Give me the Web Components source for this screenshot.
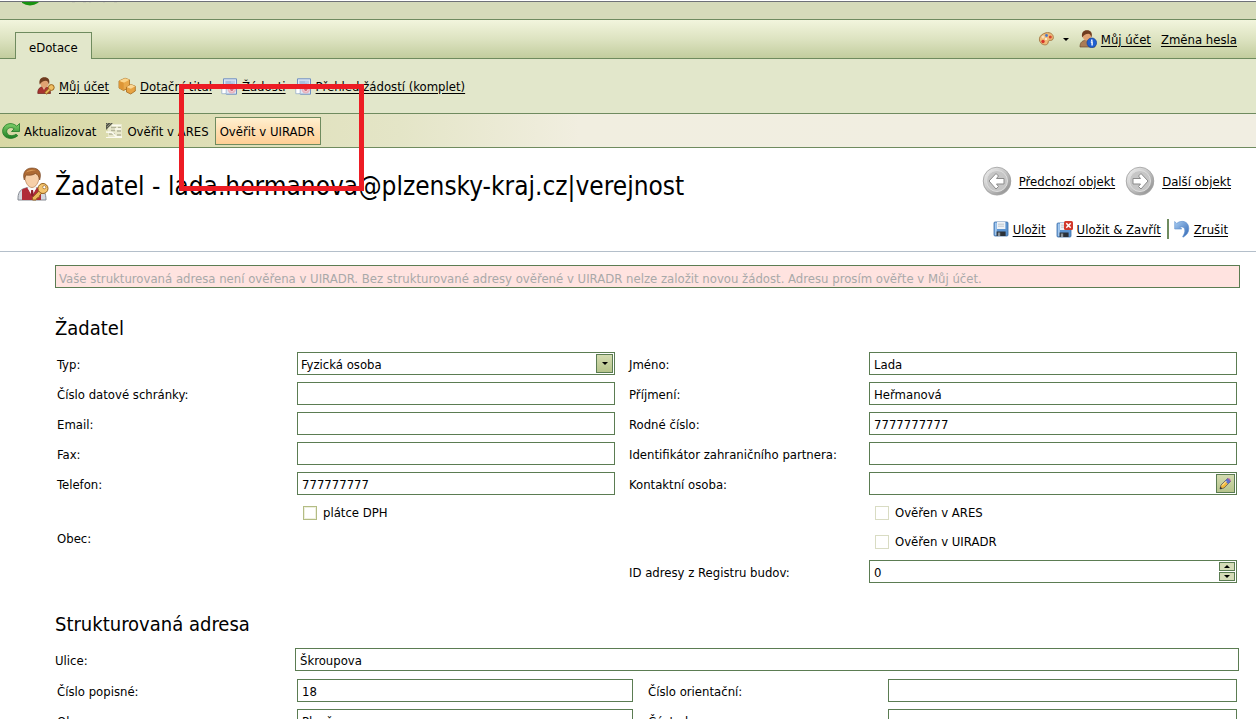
<!DOCTYPE html>
<html lang="cs">
<head>
<meta charset="utf-8">
<title>eDotace - Žadatel</title>
<style>
  html, body { height: 100%; }
  body {
    margin: 0;
    overflow: hidden;
    background: #fff;
    color: #000;
    font: 13px/16px "DejaVu Sans Condensed", "Noto Sans", sans-serif;
    --line: #6f8b5f;
    --field: #5b7c52;
  }
</style>
</head>
<body>
<edotace-page></edotace-page>
<script>
const define = (name, html, setup) => {
  const template = document.createElement('template');
  template.innerHTML = html;
  customElements.define(name, class extends HTMLElement {
    constructor() {
      super();
      this.attachShadow({ mode: 'open' }).append(template.content.cloneNode(true));
    }
    connectedCallback() {
      if (setup && !this.ready) { this.ready = true; setup(this, this.shadowRoot); }
    }
  });
};

const disk = `
  <rect x="1" y="1" width="14" height="14" rx="1" fill="#5b93d0" stroke="#3b6ca6" stroke-width=".8"/>
  <rect x="1.8" y="1.6" width="2" height="12.6" fill="#a3c8ee"/>
  <rect x="4" y="1" width="8.4" height="7" fill="#eef2f6"/>
  <path d="M5 3.2h6M5 5.2h6" stroke="#b4bcc4" stroke-width=".8"/>
  <rect x="3.6" y="10.500" width="9" height="4.500" fill="#2b3138"/>
  <rect x="4.8" y="11.500" width="2.400" height="3.500" fill="#8d959c"/>`;
const sheet = `
  <path d="M2.5 .8h13v15.4h-10l-3-2z" fill="#dfe8f5" stroke="#6f8fc0"/>
  <path d="M4 2.6h10v4H4z" fill="#b9cdea"/><path d="M5 4h5M5 6h7" stroke="#8faad0" stroke-width=".8"/>
  <path d="M.8 10.5h4.4v5.2H.8z" fill="#fff" stroke="#8ea6c8" stroke-width=".7"/>
  <circle cx="10.8" cy="11.4" r="4.2" fill="#e9b4bd"/><circle cx="10.8" cy="11.4" r="2.2" fill="#cf7180" stroke="#f6d8dd"/>`;
const hair = `<path d="M5.500 6C5 1.500 8 .6 10 .8c2.500-.2 5 1.500 4.300 5.200-.5 3-2 4.700-4.300 4.700S6 9 5.500 6z" fill="#e0a273"/>
  <path d="M5.200 7.500C4 2 7 0 10 .2c3.500 0 5.800 2.300 4.500 7.300-.7-2.500-1.500-3.700-3.200-3.800C8.800 4 6.500 5 5.200 7.500z" fill="#6f3d20"/>`;
const round = `
  <defs><linearGradient id="g" x1="0" y1="0" x2="1" y2="1"><stop offset="0" stop-color="#f4f4f4"/><stop offset=".5" stop-color="#c4c4c4"/><stop offset="1" stop-color="#858585"/></linearGradient></defs>
  <circle cx="15" cy="15.500" r="14" fill="#c2c2c2"/><circle cx="15" cy="15" r="13.800" fill="url(#g)" stroke="#a2a2a2" stroke-width=".8"/>
  <circle cx="15" cy="15" r="10.500" fill="#c6c6c6" stroke="#dedede"/>`;
const ICONS = {
  refresh: [18, 18, `<defs><linearGradient id="g" x1="0" y1="0" x2="0" y2="1"><stop offset="0" stop-color="#7fd06a"/><stop offset="1" stop-color="#1d7d22"/></linearGradient></defs>
    <path d="M17.500 1.500v8h-8l2.700-2.700C9 4.300 4.800 6 4.700 9.500c0 4 5 5.500 9.300 2.700l1.800 1.500C9.500 19 .7 16 .6 9.300.7 2 9.500-1 14.800 4.200z" fill="url(#g)" stroke="#1f7a25" stroke-width=".8"/>`],
  check: [18, 18, `<path d="M3 2h14v13H3z" fill="#e9e8cc"/><path d="M6 5.500h5M13 5.500h3M6 8.500h4M12 9h4M4 12h6M12 13h4" stroke="#b3b398" stroke-width="1.300"/>
    <path d="M7 3.500h9M10 7h6M1 10l6 .5 4 4 6 .5" stroke="#fbfaf0" stroke-width="1.300" fill="none"/><path d="M1 15.500h16" stroke="#fbfaf0"/>
    <path d="M1 1h7L1 8z" fill="#55564b"/><path d="M2 5l4-4M1 3l2-2M3 6l5-5" stroke="#a9aa92" stroke-width=".7"/>`],
  palette: [16, 16, `<path d="M8 1.800c4.500-.8 7.500 1.500 7.300 5-.1 2.500-2 2.600-3.500 2.500-1.500 0-1.500 1.300-1.800 2.700-.6 2.300-4 2.300-6.300.8C.5 10.500-.3 4 8 1.800z" fill="#f0bb78" stroke="#a87a45"/>
    <circle cx="5" cy="6" r="1.500" fill="#f6dfba"/><circle cx="8.500" cy="4.500" r="1.400" fill="#4a79c9"/><circle cx="12.300" cy="6" r="1.500" fill="#d6452d"/><circle cx="5" cy="10.500" r="1.700" fill="#d6352b"/><circle cx="8" cy="8" r="1.100" fill="#fff4de"/>`],
  userInfo: [18, 18, `<path d="M1 17c0-5 2.500-7 8-7 4 0 7 2 7 7z" fill="#a97c56" stroke="#6b4a31" stroke-width=".7"/><g transform="translate(-2 0)">${hair}</g>
    <circle cx="12.800" cy="12.800" r="4.800" fill="#1f5fd0" stroke="#13419b" stroke-width=".7"/><path d="M12.800 9.500v1.500M11.800 12h1.300v3.500" stroke="#fff" stroke-width="1.400" fill="none"/>`],
  userKey: [18, 18, `<path d="M.8 16.500C.5 12 3 9.500 7 9.500c4.500 0 6.500 2.500 6.500 7z" fill="#a8332f" stroke="#6b2320" stroke-width=".7"/><path d="M5.500 10l1.500 3L8.500 10z" fill="#e9c9a8"/><g transform="translate(-2.500 0)">${hair}</g>
    <circle cx="14.300" cy="10.500" r="2.900" fill="#f0bf62" stroke="#99641e"/><path d="M12.500 12.500L8.500 16.500" stroke="#99641e" stroke-width="3.200"/><path d="M12.500 12.500L8.700 16.300" stroke="#efbd61" stroke-width="1.600"/>`],
  boxes: [18, 18, `<path d="M1 4l6-2.800 4.500 1.600v7.700l-6 3L1 11z" fill="#e9a94b" stroke="#a46a1d" stroke-width=".8"/><path d="M1 4l6-2.800 4.500 1.600-5.700 3z" fill="#fbd58c"/><path d="M1 4l4.700 1.800v7.500L1 11z" fill="#dd9535"/>
    <path d="M8.500 10l4.500-2.500 4.300 1.700v4.800l-4.600 3-4.200-2z" fill="#e7a343" stroke="#a46a1d" stroke-width=".8"/><path d="M8.500 10l4.500-2.500 4.300 1.700-4.500 2.500z" fill="#fbd896"/>`],
  sheet: [17, 17, sheet],
  disk: [16, 16, disk],
  diskClose: [17, 17, `<g transform="translate(0 1)">${disk}</g><rect x="8" y="0" width="9" height="9" rx="1.500" fill="#d2382b"/><path d="M10.300 2.300l4.400 4.400M14.700 2.300l-4.400 4.400" stroke="#fff" stroke-width="1.500"/>`],
  undo: [16, 18, `<defs><linearGradient id="g" x1="0" y1="0" x2="1" y2="1"><stop offset="0" stop-color="#a9cdf2"/><stop offset="1" stop-color="#2f65b3"/></linearGradient></defs>
    <path d="M.7 1.500l2 2C6.500-.2 14.800.6 14.800 8.500c0 3.800-2 6.500-5.300 8.500-.8.400-1-.2-.6-.8 2.600-3.700 3-9.700-1.700-9.200L5.800 7l2 2H.7z" fill="url(#g)" stroke="#5c8fcf" stroke-width=".6"/>`],
  prev: [30, 30, round + `<path d="M7 15l7-7.500 2.500 2.500-2 2.500h7.500v5.500H14.500l2 2.500L14 23z" fill="#fff" stroke="#8b8b8b"/>`],
  next: [30, 30, round + `<path d="M23 15l-7-7.500-2.500 2.500 2 2.500H8v5.500h7.500l-2 2.500L16 23z" fill="#fff" stroke="#8b8b8b"/>`],
  person: [32, 34, `<path d="M1 33c-.3-7 2-10 6-11.500l8-2 8 2c4 1.500 6 5 6 11.500z" fill="#d4d8df" stroke="#858a92"/>
    <path d="M5 33V22.500l5-2 5 7 5-7 4 2V33z" fill="#b02c38"/><path d="M10.500 20.500l4.500 9 4.500-9-4-2z" fill="#fbfbfb"/><path d="M14.200 23h1.800l.8 5-1.600 2-1.600-2z" fill="#8e1f2b"/>
    <path d="M8 10c0-5 3-7.500 7-7.500s7.300 2.500 7 8c-.3 5.500-3.500 10-7 10S8.200 16 8 10z" fill="#f6cfa8" stroke="#b57d4e" stroke-width=".7"/>
    <path d="M7.300 13C5 6 8.500 1 15 1c7 0 10 4.500 7.700 12-.8-4-2-5.500-4.200-6.500-3 2-7 2-9.200 1.500-1.300 1.500-1.500 3-2 5z" fill="#ad6a33" stroke="#6f3d19" stroke-width=".6"/><path d="M9 5.500c2-3 7-3.500 10-2-3 0-6 .5-10 2z" fill="#d99a58"/>
    <path d="M23.500 22.500L15.500 30.500v2.500h3.500l1-2 2-.5.500-2 3.500-3.500" fill="#eab75c" stroke="#98621f"/><circle cx="26" cy="21.500" r="5" fill="#f3c46d" stroke="#98621f"/><circle cx="27.300" cy="20.200" r="1.600" fill="#fff" stroke="#98621f" stroke-width=".7"/>`],
  pencil: [13, 13, `<path d="M1 12l1-4 6.500-6.500 3 3L5 11z" fill="#f0b93c" stroke="#4c4a5c" stroke-width=".7"/><path d="M6 4l2.500-2.500 3 3L9 7z" fill="#5a6fd0"/><path d="M8.500 1.500c1-1 4 1 3 3z" fill="#b85fb0"/><path d="M1 12l.6-2.200L3.200 11.500z" fill="#222"/><path d="M3 8.500l4.500-4.500" stroke="#fff2bd"/>`],
  down: [6, 3, `<path d="M0 0h6L3 3z" fill="#000"/>`],
  up: [6, 3, `<path d="M0 3h6L3 0z" fill="#000"/>`],
  logo: [100, 4, `<ellipse cx="8" cy="-5" rx="11" ry="8.500" fill="#17920f"/><path d="M50 0h3M61 0h3M67 0h2M81 0h2M92 0h3" stroke="#bfc1b0"/>`]
};

define('app-icon', `<style>:host{display:block;flex:none} svg{display:block}</style><span></span>`, (el, root) => {
  const [w, h, body] = ICONS[el.getAttribute('name')];
  root.querySelector('span').innerHTML = `<svg width="${w}" height="${h}" viewBox="0 0 ${w} ${h}" aria-hidden="true">${body}</svg>`;
});

define('icon-link', `<style>
  :host{display:flex} a{display:flex;align-items:center;gap:4px;color:#000;white-space:nowrap;text-decoration:none}
  span{padding-top:2px;text-decoration:underline;text-underline-offset:2px}
  :host([large]) a{gap:7px}
  </style><a href="#"><slot name="icon"></slot><span><slot></slot></span></a>`);

define('tool-button', `<style>
  :host{display:flex}
  button{display:flex;align-items:center;gap:4px;height:28px;margin:0;padding:0;border:0;background:none;font:inherit;color:inherit;white-space:nowrap}
  span{padding-top:2px}
  :host([active]) button{padding:0 5px 0 4px;border:1px solid var(--line);background:linear-gradient(#fff0cf,#ffdcae 55%,#ffcf95)}
  </style><button type="button"><slot name="icon"></slot><span><slot></slot></span></button>`);

define('page-header', `<style>
  :host{display:block}
  .strip{height:17px;border-top:1px solid #6e7178;background:#d6dbba;margin-top:1px;padding-left:22px;overflow:hidden}
  .bar{display:flex;justify-content:space-between;align-items:stretch;height:38px;border:solid var(--line);border-width:1px 0;background:linear-gradient(#f2f5dd,#dde3c1 50%,#c2cd9e)}
  nav{display:flex;align-items:flex-end;padding-left:15px}
  .tab{display:block;height:26px;margin-bottom:-1px;padding:0 13px;border:1px solid var(--line);border-bottom:0;background:#e2e7cb;color:#000;text-decoration:none;line-height:30px}
  .account{display:flex;align-items:center;gap:10px;padding-right:19px}
  .theme{display:flex;align-items:center;gap:9px;border:0;padding:0;background:none}
  </style>
  <div class="strip"><app-icon name="logo"></app-icon></div>
  <div class="bar">
    <nav><a class="tab" href="#">eDotace</a></nav>
    <div class="account">
      <button class="theme" type="button" aria-label="Vzhled"><app-icon name="palette"></app-icon><app-icon name="down"></app-icon></button>
      <icon-link><app-icon slot="icon" name="userInfo"></app-icon>Můj účet</icon-link>
      <icon-link>Změna hesla</icon-link>
    </div>
  </div>`);

define('section-menu', `<style>
  :host{display:flex;align-items:center;gap:9px;height:54px;padding-left:37px;background:#e2e7cb;border-bottom:1px solid var(--line)}
  </style><slot></slot>`);

define('tool-bar', `<style>
  :host{display:flex;align-items:center;height:33px;gap:9px;padding-left:2px;border-bottom:1px solid var(--line);background:linear-gradient(90deg,#d8d8a5,#e4e5c7 400px,#f1eee0 580px,#f1eee2)}
  ::slotted([active]){margin-left:-3px}
  </style><slot></slot>`);

define('object-header', `<style>
  :host{display:flex;justify-content:space-between;height:103px;border-bottom:1px solid #b4bfca}
  .title{display:flex;align-items:center;gap:6px;height:72px;padding-left:17px}
  h1{margin:0;padding-top:4px;font-size:26px;line-height:32px;font-weight:400;white-space:nowrap}
  .actions{display:flex;flex-direction:column;align-items:flex-end;padding:18px 25px 0 0;gap:18px}
  .row{display:flex;align-items:center;gap:10px;height:30px}
  .save{padding-right:3px}
  .cancel{border-left:2px solid var(--line);margin-left:-4px;padding:1px 0 1px 5px}
  </style>
  <div class="title"><app-icon name="person"></app-icon><h1><slot></slot></h1></div>
  <div class="actions">
    <div class="row">
      <icon-link large><app-icon slot="icon" name="prev"></app-icon>Předchozí objekt</icon-link>
      <icon-link large><app-icon slot="icon" name="next"></app-icon>Další objekt</icon-link>
    </div>
    <div class="row save">
      <icon-link><app-icon slot="icon" name="disk"></app-icon>Uložit</icon-link>
      <icon-link><app-icon slot="icon" name="diskClose"></app-icon>Uložit &amp; Zavřít</icon-link>
      <icon-link class="cancel"><app-icon slot="icon" name="undo"></app-icon>Zrušit</icon-link>
    </div>
  </div>`);

define('alert-message', `<style>
  :host{display:block;box-sizing:border-box;height:23px;padding:0 3px;border:1px solid var(--field);background:#ffe3e0;color:#a9a9a9;line-height:26px;white-space:nowrap;overflow:hidden}
  </style><slot></slot>`);

define('form-field', `<style>
  :host{display:grid;grid-template-columns:240px minmax(0,1fr);align-items:center;height:23px}
  label{padding-top:2px}
  .box{display:flex;align-items:center;box-sizing:border-box;height:23px;border:1px solid var(--field);background:#fff;padding-right:1px}
  input,select{flex:1;min-width:0;height:21px;box-sizing:border-box;margin:0;padding:2px 0 0 4px;border:0;outline:0;background:none;border-radius:0;font:inherit;color:inherit;appearance:none}
  select{padding-left:3px}
  button,.arrow{display:flex;align-items:center;justify-content:center;box-sizing:border-box;padding:0;border:1px solid var(--field);background:linear-gradient(#d3dbb0,#b6c48b)}
  .arrow{width:17px;height:19px;pointer-events:none}
  .edit{width:19px;height:19px}
  .spin{display:flex;flex-direction:column;gap:1px}
  .spin button{width:16px;height:9px;background:#d5dcb8}
  </style><label for="f"></label><div class="box"></div>`, (el, root) => {
  const label = el.getAttribute('label'), value = el.getAttribute('value') || '', kind = el.getAttribute('kind');
  root.querySelector('label').textContent = label;
  root.querySelector('.box').innerHTML =
    kind === 'select' ? `<select id="f"><option>${value}</option></select><span class="arrow"><app-icon name="down"></app-icon></span>` :
    `<input id="f" type="text" value="${value}">` + (
      kind === 'lookup' ? `<button class="edit" type="button" aria-label="Upravit"><app-icon name="pencil"></app-icon></button>` :
      kind === 'number' ? `<span class="spin"><button type="button" aria-label="Zvýšit"><app-icon name="up"></app-icon></button><button type="button" aria-label="Snížit"><app-icon name="down"></app-icon></button></span>` : '');
});

define('check-field', `<style>
  :host{display:flex;align-items:center;height:22px;padding-left:246px}
  label{display:flex;align-items:center;gap:6px}
  input{appearance:none;box-sizing:border-box;width:14px;height:14px;margin:0;border:1px solid #b3bc84;background:#fff;box-shadow:inset 0 0 0 1px #eef0de}
  input:disabled{border-color:#d9dcc3;box-shadow:none}
  </style><label><input type="checkbox"><slot></slot></label>`, (el, root) => {
  root.querySelector('input').disabled = el.hasAttribute('disabled');
});

define('form-section', `<style>
  :host{display:block;padding:0 17px 0 55px}
  h2{margin:0 0 11px;font-size:20px;line-height:26px;font-weight:400}
  .lead{margin-bottom:8px}
  .grid{display:grid;grid-template-columns:minmax(0,558fr) minmax(0,608fr);gap:7px 14px;padding:0 2px}
  :host([wide]) .grid{grid-template-columns:minmax(0,576fr) minmax(0,589fr);column-gap:15px}
  </style><h2><slot name="heading"></slot></h2><div class="lead"><slot name="lead"></slot></div><div class="grid"><slot></slot></div>`, (el, root) => {
  if (!el.querySelector('[slot=lead]')) root.querySelector('.lead').remove();
});

define('edotace-page', `<style>
  :host{display:block;position:relative;background:#fff;box-shadow:inset 0 1px #e4ebf7}
  .mark{position:absolute;left:179px;top:83px;width:185px;height:107px;box-sizing:border-box;border:5px solid #ed1c24;pointer-events:none}
  alert-message{margin:13px 16px 27px 55px}
  form-section{margin-bottom:28px}
  </style>
  <page-header></page-header>
  <section-menu>
    <icon-link><app-icon slot="icon" name="userKey"></app-icon>Můj účet</icon-link>
    <icon-link><app-icon slot="icon" name="boxes"></app-icon>Dotační titul</icon-link>
    <icon-link><app-icon slot="icon" name="sheet"></app-icon>Žádosti</icon-link>
    <icon-link><app-icon slot="icon" name="sheet"></app-icon>Přehled žádostí (komplet)</icon-link>
  </section-menu>
  <tool-bar>
    <tool-button><app-icon slot="icon" name="refresh"></app-icon>Aktualizovat</tool-button>
    <tool-button><app-icon slot="icon" name="check"></app-icon>Ověřit v ARES</tool-button>
    <tool-button active>Ověřit v UIRADR</tool-button>
  </tool-bar>
  <object-header>Žadatel - lada.hermanova@plzensky-kraj.cz|verejnost</object-header>
  <alert-message>Vaše strukturovaná adresa není ověřena v UIRADR. Bez strukturované adresy ověřené v UIRADR nelze založit novou žádost. Adresu prosím ověřte v Můj účet.</alert-message>
  <form-section>
    <span slot="heading">Žadatel</span>
    <form-field label="Typ:" kind="select" value="Fyzická osoba"></form-field>
    <form-field label="Jméno:" value="Lada"></form-field>
    <form-field label="Číslo datové schránky:"></form-field>
    <form-field label="Příjmení:" value="Heřmanová"></form-field>
    <form-field label="Email:"></form-field>
    <form-field label="Rodné číslo:" value="7777777777"></form-field>
    <form-field label="Fax:"></form-field>
    <form-field label="Identifikátor zahraničního partnera:"></form-field>
    <form-field label="Telefon:" value="777777777"></form-field>
    <form-field label="Kontaktní osoba:" kind="lookup"></form-field>
    <check-field>plátce DPH</check-field>
    <check-field disabled>Ověřen v ARES</check-field>
    <span>Obec:</span>
    <check-field disabled>Ověřen v UIRADR</check-field>
    <span></span>
    <form-field label="ID adresy z Registru budov:" kind="number" value="0"></form-field>
  </form-section>
  <form-section wide>
    <span slot="heading">Strukturovaná adresa</span>
    <form-field slot="lead" label="Ulice:" value="Škroupova"></form-field>
    <form-field label="Číslo popisné:" value="18"></form-field>
    <form-field label="Číslo orientační:"></form-field>
    <form-field label="Obec:" value="Plzeň"></form-field>
    <form-field label="Část obce:"></form-field>
  </form-section>
  <div class="mark"></div>`);
</script>
</body>
</html>
